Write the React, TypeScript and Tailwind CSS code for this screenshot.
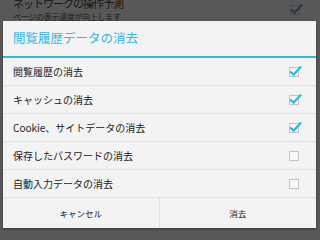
const font = { fontFamily: '"Noto Sans CJK JP", "Noto Sans", sans-serif' };

function CheckBox({ checked, dim = false }: { checked: boolean; dim?: boolean }) {
  const box = dim ? '#4a4a4a' : '#c4c4c4';
  const tick = dim ? '#1f3f4c' : '#33b5e5';
  return (
    <svg width="14" height="14" viewBox="0 0 14 14" className="shrink-0">
      <rect x="1.5" y="2.5" width="9" height="9" fill={dim ? 'none' : '#f8f8f8'} stroke={box} strokeWidth="1" />
      {checked && (
        <path d="M3 7.2 L5.6 9.6 L12.4 2.4" fill="none" stroke={tick} strokeWidth="2.2" strokeLinecap="square" />
      )}
    </svg>
  );
}

const items = [
  { label: '閲覧履歴の消去', checked: true },
  { label: 'キャッシュの消去', checked: true },
  { label: 'Cookie、サイトデータの消去', checked: true },
  { label: '保存したパスワードの消去', checked: false },
  { label: '自動入力データの消去', checked: false },
];

export default function App() {
  return (
    <div className="relative w-[320px] h-[240px] overflow-hidden bg-[#585858]" style={font}>
      {/* dimmed settings page behind */}
      <div className="flex items-start justify-between pl-[13px] pr-[17px] -mt-[3px]">
        <div className="flex flex-col">
          <span className="text-[11px] leading-[13px] tracking-[-1px] text-[#141414]">ネットワークの操作予測</span>
          <span className="text-[8px] leading-[13px] tracking-[-0.3px] text-[#1c1c1c]">ページの表示速度が向上します</span>
        </div>
        <div className="mt-[6px]">
          <CheckBox checked dim />
        </div>
      </div>

      {/* dialog */}
      <div className="absolute left-[3px] top-[21px] w-[313px] flex flex-col bg-[#f3f3f3] shadow-[0_1px_2px_rgba(0,0,0,0.4)]">
        <div className="h-[35px] flex items-center pl-[10px] text-[12.5px] text-[#33b5e5]">閲覧履歴データの消去</div>
        <div className="h-[2px] bg-[#33b5e5]" />
        {items.map((it) => (
          <div key={it.label} className="h-[28px] flex items-center justify-between pl-[10px] pr-[14px] border-b border-[#e0e0e0]">
            <span className="text-[10px] text-[#222]">{it.label}</span>
            <CheckBox checked={it.checked} />
          </div>
        ))}
        <div className="h-[30px] grid grid-cols-2">
          <button className="flex items-center justify-center text-[8.5px] text-[#222] border-r border-[#e0e0e0]">キャンセル</button>
          <button className="flex items-center justify-center text-[8.5px] text-[#222]">消去</button>
        </div>
      </div>
    </div>
  );
}
